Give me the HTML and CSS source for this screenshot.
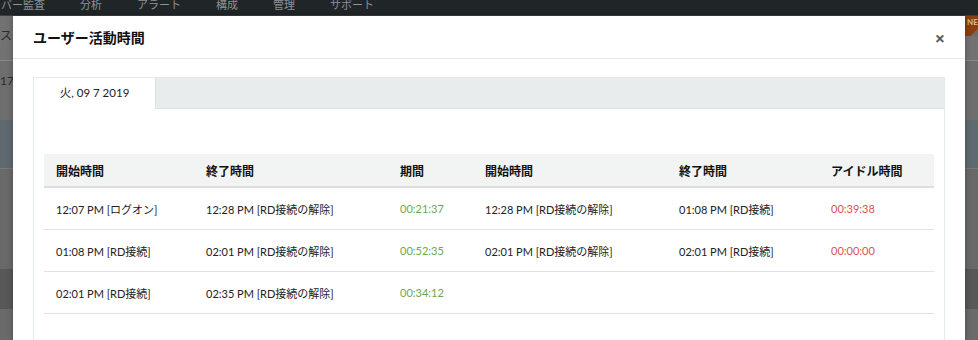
FILE: index.html
```html
<!DOCTYPE html>
<html lang="ja">
  <head>
    <meta charset="UTF-8" />
    <title>ユーザー活動時間</title>
    <link rel="stylesheet" href="styles.css">
  </head>
  <body>
    <!-- page behind the dialog -->
    <div class="topbar">
      <span class="nav-item first">サーバー監査</span>
      <span class="nav-item">分析</span>
      <span class="nav-item">アラート</span>
      <span class="nav-item">構成</span>
      <span class="nav-item">管理</span>
      <span class="nav-item">サポート</span>
    </div>
    <div class="backdrop">
      <div class="bg-row bg-menu">ス ▾</div>
      <div class="bg-row bg-time">17:0</div>
      <div class="bg-row bg-band"></div>
      <div class="bg-row bg-line"></div>
      <div class="bg-row bg-dark"></div>
    </div>
    <span class="new-badge">NEW</span>

    <!-- dialog -->
    <div class="modal">
      <div class="modal-header">
        <h4>ユーザー活動時間</h4>
        <span class="close">×</span>
      </div>
      <div class="modal-body">
        <div class="tabs">
          <div class="tab-strip">
            <div class="tab active">火, 09 7 2019</div>
          </div>
          <div class="tab-pane">
            <table>
              <thead>
                <tr>
                  <th class="c1">開始時間</th>
                  <th class="c2">終了時間</th>
                  <th class="c3">期間</th>
                  <th class="c4">開始時間</th>
                  <th class="c5">終了時間</th>
                  <th class="c6">アイドル時間</th>
                </tr>
              </thead>
              <tbody>
                <tr>
                  <td>12:07 PM [ログオン]</td>
                  <td>12:28 PM [RD接続の解除]</td>
                  <td class="active-time">00:21:37</td>
                  <td>12:28 PM [RD接続の解除]</td>
                  <td>01:08 PM [RD接続]</td>
                  <td class="idle-time">00:39:38</td>
                </tr>
                <tr>
                  <td>01:08 PM [RD接続]</td>
                  <td>02:01 PM [RD接続の解除]</td>
                  <td class="active-time">00:52:35</td>
                  <td>02:01 PM [RD接続の解除]</td>
                  <td>02:01 PM [RD接続]</td>
                  <td class="idle-time">00:00:00</td>
                </tr>
                <tr>
                  <td>02:01 PM [RD接続]</td>
                  <td>02:35 PM [RD接続の解除]</td>
                  <td class="active-time">00:34:12</td>
                  <td></td>
                  <td></td>
                  <td></td>
                </tr>
              </tbody>
            </table>
          </div>
        </div>
      </div>
    </div>
  </body>
</html>
```

FILE: styles.css
```css
body {
  margin: 0;
  width: 978px;
  height: 340px;
  overflow: hidden;
  background: #6a6a6a;
  font-family: Lato, "Noto Sans CJK JP", sans-serif;
  color: #222;
}
.topbar {
  height: 16px;
  background: #202528;
  display: flex;
  overflow: hidden;
  border-bottom: 1px solid #3a3f42;
  box-sizing: border-box;
}
.nav-item {
  font-family: "Noto Sans CJK JP", sans-serif;
  font-size: 11px;
  line-height: 12px;
  margin-top: -2px;
  color: #8d9297;
  margin-left: 35px;
}
.nav-item.first {
  margin-left: -21px;
}
.backdrop {
  display: flex;
  flex-direction: column;
}
.bg-row {
  font-size: 12px;
  color: #2b2b2b;
}
.bg-menu {
  height: 44px;
  line-height: 40px;
  background: #727272;
  border-bottom: 1px solid #8a8a8a;
}
.bg-time {
  height: 59px;
  line-height: 40px;
  background: #6e6e6e;
}
.bg-band {
  height: 48px;
  background: #5f6a70;
}
.bg-line {
  height: 100px;
  background: #696969;
  border-top: 1px solid #7a7a7a;
}
.bg-dark {
  height: 40px;
  background: #585858;
}
.new-badge {
  position: absolute;
  left: 965px;
  top: 16px;
  width: 20px;
  height: 20px;
  background: linear-gradient(135deg, #8a3f0c 60%, #6a6a6a 60%);
  color: #d9b8a0;
  font-size: 8px;
  font-weight: bold;
  line-height: 12px;
  padding-left: 2px;
  overflow: hidden;
}
.modal {
  position: absolute;
  left: 13px;
  top: 16px;
  width: 952px;
  height: 324px;
  overflow: hidden;
  background: #fff;
  box-shadow: 0 0 6px rgba(0, 0, 0, 0.3);
}
.modal-header {
  height: 42px;
  display: flex;
  align-items: center;
  justify-content: space-between;
  padding: 0 20px;
  border-bottom: 1px solid #e8e8e8;
}
.modal-header h4 {
  margin: 0;
  font-size: 14px;
  font-weight: bold;
  color: #111;
  font-family: "Noto Sans CJK JP", sans-serif;
}
.close {
  font-family: "Open Sans", sans-serif;
  font-size: 18px;
  font-weight: bold;
  color: #55606b;
  margin-top: 2px;
}
.modal-body {
  padding: 18px 20px 0;
}
.tabs {
  border: 1px solid #e4e9e9;
  border-bottom: none;
  height: 300px;
}
.tab-strip {
  height: 30px;
  background: #e9ecec;
  border-bottom: 1px solid #dde2e2;
  display: flex;
}
.tab {
  width: 122px;
  font-size: 11.5px;
  line-height: 30px;
  text-align: center;
  color: #222;
}
.tab.active {
  background: #fff;
  height: 31px;
  border-right: 1px solid #dde2e2;
  box-sizing: border-box;
}
.tab-pane {
  padding: 45px 10px 0;
}
table {
  width: 100%;
  border-collapse: collapse;
  font-size: 11px;
}
th {
  background: #f2f3f3;
  height: 32px;
  padding: 0 12px;
  text-align: left;
  font-size: 12px;
  font-weight: bold;
  border-bottom: 2px solid #dedede;
  font-family: "Noto Sans CJK JP", sans-serif;
  color: #111;
}
td {
  height: 41px;
  padding: 0 12px;
  border-bottom: 1px solid #e2e2e2;
  color: #222;
}
.c1 { width: 126px; }
.c2 { width: 170px; }
.c3 { width: 61px; }
.c4 { width: 170px; }
.c5 { width: 128px; }
.active-time {
  color: #6aa84f;
}
.idle-time {
  color: #d9534f;
}
```
